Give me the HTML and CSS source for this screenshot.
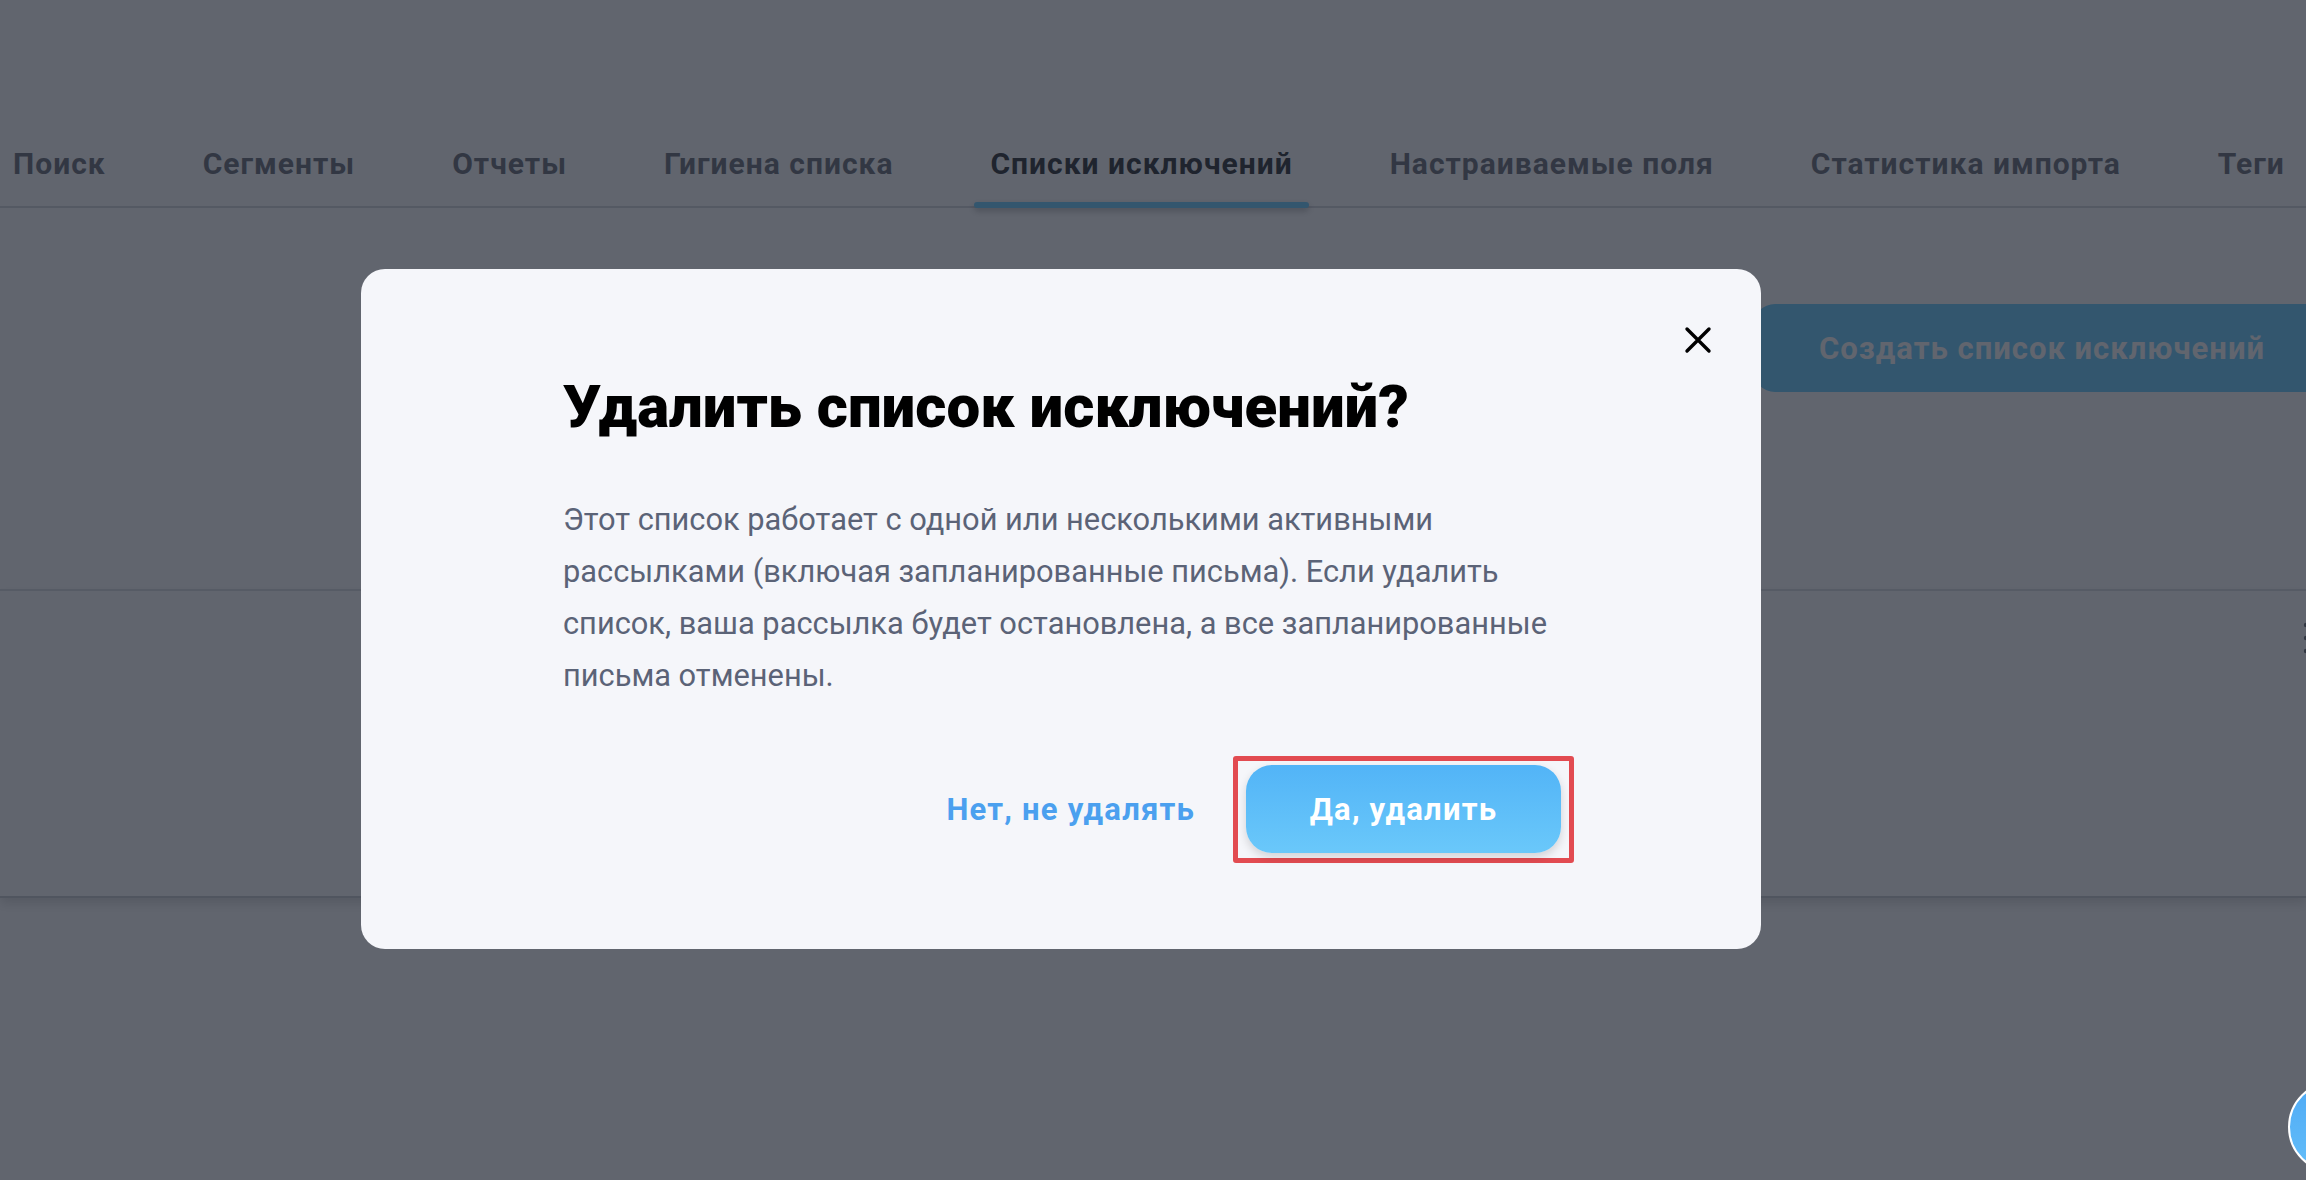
FILE: index.html
```html
<!DOCTYPE html>
<html lang="ru">
<head>
    <meta charset="utf-8">
    <title>Списки исключений</title>
    <link rel="stylesheet" href="styles.css">
</head>
<body>
<div class="page">
    <nav class="tabs">
        <a class="tab">Поиск</a>
        <a class="tab">Сегменты</a>
        <a class="tab">Отчеты</a>
        <a class="tab">Гигиена списка</a>
        <a class="tab active">Списки исключений</a>
        <a class="tab">Настраиваемые поля</a>
        <a class="tab">Статистика импорта</a>
        <a class="tab">Теги</a>
    </nav>

    <div class="toolbar">
        <button class="btn-create">Создать список исключений</button>
    </div>

    <div class="table">
        <div class="table-row">
            <span class="kebab">
                <svg width="8" height="34" viewBox="0 0 8 34">
                    <circle cx="4" cy="4" r="2.2"/>
                    <circle cx="4" cy="17" r="2.2"/>
                    <circle cx="4" cy="30" r="2.2"/>
                </svg>
            </span>
        </div>
    </div>
</div>

<div class="overlay">
    <div class="modal">
        <button class="modal-close" aria-label="Закрыть">
            <svg width="28" height="28" viewBox="0 0 28 28">
                <path d="M3 3 L25 25 M25 3 L3 25" stroke="#000" stroke-width="3.4" stroke-linecap="round" fill="none"/>
            </svg>
        </button>
        <h2 class="modal-title">Удалить список исключений?</h2>
        <p class="modal-text">
            Этот список работает с одной или несколькими активными рассылками (включая запланированные письма).
            Если удалить список, ваша рассылка будет остановлена, а все запланированные письма отменены.
        </p>
        <div class="modal-actions">
            <button class="btn-link">Нет, не удалять</button>
            <div class="highlight">
                <button class="btn-primary">Да, удалить</button>
            </div>
        </div>
    </div>
</div>

<div class="chat-widget"></div>
</body>
</html>
```

FILE: styles.css
```css
html, body {
    margin: 0;
    height: 100%;
    overflow: hidden;
}

body {
    font-family: Roboto, "Liberation Sans", sans-serif;
    background: #ffffff;
}

/* page under the dialog */

.page {
    position: relative;
}

.tabs {
    display: flex;
    gap: 65px;
    margin-left: -3px;
    padding-top: 146px;
    border-bottom: 2px solid #dadce0;
}

.tab {
    position: relative;
    padding: 0 16px 24px;
    font-size: 30px;
    line-height: 36px;
    font-weight: 700;
    letter-spacing: 1px;
    color: #7a7d85;
    white-space: nowrap;
}

.tab.active {
    color: #434549;
}

.tab.active::after {
    content: "";
    position: absolute;
    left: 0;
    right: 0;
    bottom: -2px;
    height: 6px;
    border-radius: 3px;
    background: #7cd3ff;
    box-shadow: 0 3px 6px rgba(0, 0, 0, 0.25);
}

.toolbar {
    display: flex;
    justify-content: flex-end;
    margin-right: -25px;
    padding: 96px 0 197px;
}

.btn-create {
    height: 88px;
    padding: 0 66px;
    border: none;
    border-radius: 22px;
    background: #7bd4ff;
    color: #ffffff;
    font-family: Roboto, "Liberation Sans", sans-serif;
    font-size: 31px;
    font-weight: 700;
    letter-spacing: 1px;
}

.table {
    height: 305px;
    border-top: 2px solid #dfe1e6;
    border-bottom: 2px solid #cfd0d3;
    box-shadow: 0 6px 10px rgba(0, 0, 0, 0.12);
}

.table-row {
    display: flex;
    justify-content: flex-end;
    padding-top: 30px;
    margin-right: -4px;
}

.kebab svg {
    fill: #777b82;
}

/* dialog */

.overlay {
    position: fixed;
    inset: 0;
    background: rgba(12, 18, 32, 0.65);
    padding: 269px 0 0 361px;
}

.modal {
    position: relative;
    width: 1400px;
    height: 680px;
    box-sizing: border-box;
    padding: 102px 200px 86px 202px;
    border-radius: 24px;
    background: #f5f6fa;
}

.modal-close {
    position: absolute;
    top: 57px;
    right: 49px;
    width: 28px;
    height: 28px;
    padding: 0;
    border: none;
    background: none;
}

.modal-close svg {
    display: block;
}

.modal-title {
    margin: 0;
    font-size: 60px;
    line-height: 72px;
    font-weight: 900;
    color: #000000;
}

.modal-text {
    margin: 51px 0 0;
    font-size: 30.8px;
    line-height: 52px;
    color: #5b6377;
}

.modal-actions {
    display: flex;
    justify-content: flex-end;
    align-items: center;
    gap: 38px;
    margin-top: 54px;
    margin-right: -13px;
}

.btn-link {
    padding: 0;
    border: none;
    background: none;
    color: #4ba0ef;
    font-family: Roboto, "Liberation Sans", sans-serif;
    font-size: 31px;
    font-weight: 700;
    letter-spacing: 1.2px;
}

.highlight {
    padding: 4px 8px 5px;
    border: 5px solid #e24b51;
    border-radius: 3px;
}

.btn-primary {
    display: block;
    width: 315px;
    height: 88px;
    border: none;
    border-radius: 26px;
    background: linear-gradient(#52b4f7, #6ac8fa);
    box-shadow: 0 4px 10px rgba(0, 0, 0, 0.15);
    color: #ffffff;
    font-family: Roboto, "Liberation Sans", sans-serif;
    font-size: 31px;
    font-weight: 700;
    letter-spacing: 1.2px;
}

.chat-widget {
    position: fixed;
    right: -74px;
    bottom: 7px;
    width: 88px;
    height: 88px;
    border: 2px solid #ffffff;
    border-radius: 50%;
    background: linear-gradient(#4faaf5, #63bef9);
}
```
